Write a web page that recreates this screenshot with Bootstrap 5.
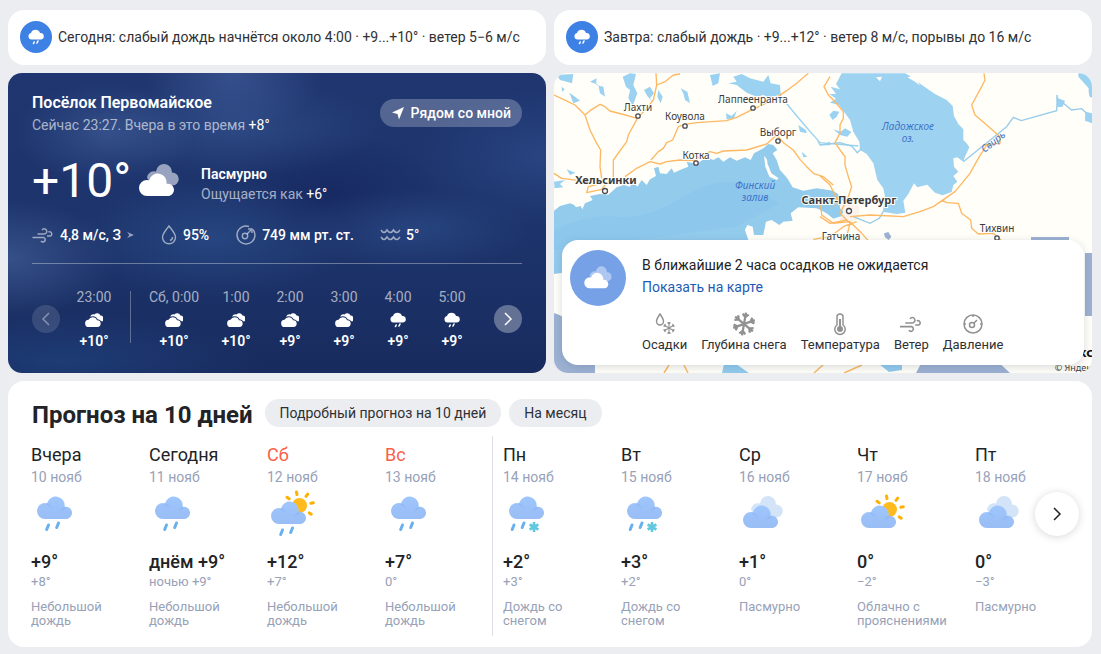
<!DOCTYPE html>
<html lang="ru">
<head>
<meta charset="utf-8">
<meta name="viewport" content="width=device-width, initial-scale=1">
<title>Погода — Посёлок Первомайское</title>
<link rel="stylesheet" href="https://cdn.jsdelivr.net/npm/bootstrap@5.3.0/dist/css/bootstrap.min.css">
<style>
:root { --ink: #222326; --muted: #97a1b8; }
body { background: #ecedf1; color: var(--ink); font-family: Roboto, "Noto Sans", sans-serif; font-size: 14px; line-height: 20px; }
.page { padding: 10px 9px 7px 8px; }
.tiles { --bs-gutter-x: 8px; --bs-gutter-y: 8px; }
.panel { background: #fff; border-radius: 16px; }
.alert-tile { min-height: 55px; padding: 0 12px 2px; gap: 6px; }
.alert-tile span { color: #2f3033; }
.disc { width: 32px; height: 32px; border-radius: 50%; background: #3d81e5; color: #fff; }
svg { display: block; flex: none; overflow: visible; }

.now { min-height: 300px; padding: 20px 24px 21px; color: #fff; border-radius: 14px;
  background:
    radial-gradient(ellipse 90px 50px at 18% 20%, rgba(96,130,190,.32), transparent),
    radial-gradient(ellipse 150px 50px at 42% 18%, rgba(80,118,180,.3), transparent),
    radial-gradient(ellipse 90px 55px at 42% 0, rgba(90,120,185,.4), transparent),
    radial-gradient(ellipse 110px 60px at 0 62%, rgba(96,130,185,.38), transparent),
    radial-gradient(ellipse 140px 60px at 38% 55%, rgba(54,96,160,.4), transparent),
    radial-gradient(ellipse 120px 40px at 75% 52%, rgba(60,100,165,.35), transparent),
    radial-gradient(ellipse 130px 70px at 100% 28%, rgba(60,96,165,.35), transparent),
    radial-gradient(ellipse 110px 60px at 60% 40%, rgba(16,26,84,.4), transparent),
    radial-gradient(ellipse 200px 50px at 10% 96%, rgba(38,84,150,.4), transparent),
    linear-gradient(#1f3670, #1c336a 60%, #182b5e); }
.now h1 { font-size: 16px; line-height: 20px; font-weight: 600; margin-bottom: 2px; }
.dim { color: rgba(255,255,255,.62); }
.near { height: 28px; margin-top: 6px; padding: 0 11px; gap: 6px; border: 0; border-radius: 14px; background: rgba(255,255,255,.24); color: #fff; font-weight: 500; }
.temp-row { margin-top: 18px; }
.temp-now { font-size: 48px; line-height: 56px; width: 107px; }
.feels { margin: 6px 0 0 22px; }
.facts { font-size: 14px; line-height: 20px; font-weight: 500; gap: 27px; margin-top: 16px; padding-bottom: 18px; border-bottom: 1px solid rgba(255,255,255,.34); }
.facts > div { gap: 6px; }
.facts svg { color: rgba(255,255,255,.55); }
.hours { margin-top: 23px; }
.hour { width: 54px; flex: none; }
.hour-wide { width: 70px; flex: none; }
.hour svg, .hour-wide svg { margin: 5px auto 3px; }
.midnight { width: 1px; height: 52px; margin: 4px 8px 0 9px; background: rgba(255,255,255,.3); }
.round { width: 28px; height: 28px; margin: 18px 7px 0 0; border: 0; border-radius: 50%; padding: 0; color: #fff; background: rgba(255,255,255,.32); }
.round:last-child { margin-right: 0; }
.round:disabled { background: rgba(255,255,255,.13); color: rgba(255,255,255,.4); }

.map-tile { min-height: 300px; border-radius: 14px; overflow: hidden; background: #fffef8; }
.map-tile > svg { position: absolute; inset: 0; width: 100%; height: 100%; }
.map-tile text { font-family: "Noto Sans", sans-serif; font-size: 10px; fill: #3c3c40; paint-order: stroke; stroke: #fffef8; stroke-width: 2px; }
.map-tile .city { font-size: 11px; font-weight: 700; }
.map-tile .sea { fill: #3f73c8; font-style: italic; stroke: none; }
.map-tile .logo { font-size: 13px; font-weight: 700; fill: #111; }
.map-tile .rights { font-size: 9px; }
.map-card { position: absolute; left: 8px; right: 8px; bottom: 8px; padding: 10px 8px 11px; gap: 16px; box-shadow: 0 2px 8px rgba(40,60,100,.18); }
.map-card .disc { width: 56px; height: 56px; background: #76a1e7; }
.map-card p { line-height: 22px; margin: 4px 0 0; }
.map-card a { line-height: 22px; color: #1f5bb5; }
.layers { gap: 14px; margin-top: 14px; }
.layers button { border: 0; background: none; padding: 0; color: #2f3033; font-size: 13px; line-height: 18px; }
.layers svg { margin: 0 auto; color: #919191; }

.forecast { padding: 18px 12px 11px; }
.forecast h2 { font-size: 24px; line-height: 32px; font-weight: 700; }
.pill { height: 28px; line-height: 28px; padding: 0 15px; border-radius: 14px; background: #ecedf1; color: #2f3033; }
.days { margin-top: 5px; overflow: hidden; }
.day { flex: 0 0 118px; min-height: 200px; padding: 7px 4px 0 10px; border-left: 1px solid transparent; font-size: 13px; line-height: 14px; color: var(--muted); }
.day.week { border-color: #dcdee3; }
.day h3 { font-size: 18px; line-height: 24px; font-weight: 400; color: var(--ink); }
.day.off h3 { color: #f9604a; }
.day time { font-size: 14px; line-height: 20px; }
.day svg { margin-bottom: 7px; }
.day strong { font-size: 18px; line-height: 24px; font-weight: 500; color: var(--ink); }
.day small { font-size: 13px; line-height: 16px; margin-bottom: 10px; }
.more { position: absolute; right: 13px; top: 111px; width: 44px; height: 44px; border: 0; border-radius: 50%; padding: 0; background: #fff; color: var(--ink); box-shadow: 0 1px 8px rgba(0,0,0,.16); }
</style>
<script src="https://cdn.jsdelivr.net/npm/bootstrap@5.3.0/dist/js/bootstrap.bundle.min.js"></script>
</head>
<body>
<svg width="0" height="0" class="position-absolute" aria-hidden="true">
  <defs>
    <linearGradient id="sky" x1="0" y1="0" x2="0" y2="1"><stop stop-color="#9fc6fe"/><stop offset="1" stop-color="#99bdf5"/></linearGradient>
    <path id="cloud" d="M8 22A8 8 0 0 1 8 6q1 0 2 .2A9 9 0 0 1 27.600 9.800 6.200 6.200 0 1 1 30 22Z"/>
    <path id="backcloud" d="M0 13A7 7 0 0 1 9 6.500A8 8 0 0 1 25 7.500A6.500 6.500 0 0 1 25.500 20.500H6Z"/>
    <g id="bluecloud"><use href="#cloud" fill="url(#sky)"/><path d="M10 6.200q4 1.500 5 6-2-4-6-4zM27.600 9.800q-3.500 1.500-4 5 2-3 5.500-3.500z" fill="#7ba7e8" opacity=".35"/></g>
    <g id="drops" fill="none" stroke="#69b0ee" stroke-width="3" stroke-linecap="round"><path d="M1.200 7.500 3 3M11.200 5.500 13 1"/></g>
    <g id="sun"><circle r="7.500" fill="#ffbb1e"/><g stroke="#ffb103" stroke-width="3" stroke-linecap="round"><path d="M-12.500-8.200l2.200 1.600M-3-13.500l.5 2.600M8.200-11.400 6.500-9.200M13.800-2.700 11.300-2.200M11.700 8.700 9.800 7.400"/></g></g>
    <g id="flake" stroke="#62c8e0" stroke-width="2.600"><path d="M0-5V5M-4.400-2.500 4.400 2.500M-4.400 2.500 4.400-2.500"/></g>
  </defs>
  <symbol id="rain" viewBox="0 0 56 62"><use href="#bluecloud" x="6" y="10"/><use href="#drops" x="14.500" y="35"/></symbol>
  <symbol id="sleet" viewBox="0 0 56 62"><use href="#bluecloud" x="6" y="10"/><use href="#drops" x="8" y="35"/><use href="#flake" x="31" y="40"/></symbol>
  <symbol id="sunrain" viewBox="0 0 56 62"><use href="#sun" x="32.500" y="18.500"/><use href="#bluecloud" x="4" y="15"/><use href="#drops" x="12.500" y="40"/></symbol>
  <symbol id="partly" viewBox="0 0 56 62"><use href="#sun" x="32.500" y="22.500"/><use href="#bluecloud" x="4" y="19"/></symbol>
  <symbol id="overcast" viewBox="0 0 56 62"><use href="#backcloud" x="12" y="10" fill="#d3e4f8"/><use href="#bluecloud" x="4" y="19"/></symbol>
  <symbol id="h-cloud" viewBox="0 0 18 16"><path d="M5 4.500Q7 1.500 9.500 2.500A3.600 3.600 0 0 1 15.500 3.500A3.200 3.200 0 0 1 17 9.500L13 8Z" fill="currentColor"/><path d="M4 15A3.600 3.600 0 0 1 3.500 7.800 4.600 4.600 0 0 1 12 8.200 3.400 3.400 0 0 1 12.500 15Z" fill="currentColor" stroke="#1b2f64" stroke-width="2" paint-order="stroke"/></symbol>
  <symbol id="h-rain" viewBox="0 0 18 16"><path d="M4.500 10.500A3.300 3.300 0 0 1 4 4 4.800 4.800 0 0 1 13 4 3.200 3.200 0 1 1 14 10.500Z" fill="currentColor"/><path d="M6.500 14.500 7.200 13M10 14 11 12" stroke="currentColor" stroke-width="1.600" stroke-linecap="round"/></symbol>
  <symbol id="wind" viewBox="0 0 21 16"><g fill="none" stroke="currentColor" stroke-width="1.500"><path d="M5 7H12A2.600 2.600 0 1 0 9.500 3M0 10.500H11A2.300 2.300 0 1 1 8.500 14M14.500 9H18A2.100 2.100 0 1 0 16 5"/></g></symbol>
  <symbol id="gauge" viewBox="0 0 20 20"><g fill="none" stroke="currentColor" stroke-width="1.500"><circle cx="10" cy="10" r="9"/><circle cx="9" cy="11" r="2.500"/><path d="M11 9 14 6M10 1v2M1 10h2M17 10h2"/></g></symbol>
  <symbol id="right" viewBox="0 0 12 14"><path d="M3 1 9 7 3 13" fill="none" stroke="currentColor" stroke-width="1.500"/></symbol>
</svg>

<main class="page container-fluid">
  <div class="row tiles">
    <div class="col-6">
      <div class="panel alert-tile d-flex align-items-center">
        <div class="disc d-flex align-items-center justify-content-center"><svg width="18" height="16"><use href="#h-rain"/></svg></div>
        <span>Сегодня: слабый дождь начнётся около 4:00 · +9...+10° · ветер 5−6 м/с</span>
      </div>
    </div>
    <div class="col-6">
      <div class="panel alert-tile d-flex align-items-center">
        <div class="disc d-flex align-items-center justify-content-center"><svg width="18" height="16"><use href="#h-rain"/></svg></div>
        <span>Завтра: слабый дождь · +9...+12° · ветер 8 м/с, порывы до 16 м/с</span>
      </div>
    </div>

    <div class="col-6">
      <section class="now">
        <div class="d-flex justify-content-between align-items-start">
          <div>
            <h1>Посёлок Первомайское</h1>
            <div class="dim">Сейчас 23:27. Вчера в это время <span class="text-white">+8°</span></div>
          </div>
          <button type="button" class="near d-flex align-items-center">
            <svg width="14" height="14" viewBox="0 0 14 14"><path d="M1 6.500 13 1 8 13.500 6.500 8Z" fill="currentColor"/></svg>
            Рядом со мной
          </button>
        </div>
        <div class="temp-row d-flex align-items-center">
          <div class="temp-now">+10°</div>
          <svg width="40" height="32" viewBox="0 0 40 32"><use href="#backcloud" x="8" fill="#98a3c0"/><use href="#cloud" y="9" fill="#fff"/></svg>
          <div class="feels"><div class="fw-semibold">Пасмурно</div><div class="dim">Ощущается как <span class="text-white">+6°</span></div></div>
        </div>
        <div class="facts d-flex">
          <div class="d-flex align-items-center"><svg width="22" height="16"><use href="#wind"/></svg>4,8 м/с, З<svg width="7" height="6" viewBox="0 0 9 8"><path d="M0 0 9 4 0 8 3 4Z" fill="currentColor"/></svg></div>
          <div class="d-flex align-items-center"><svg width="16" height="20" viewBox="0 0 16 20"><path d="M8 1C5 5 1.500 8.500 1.500 12.300a6.500 6.500 0 0 0 13 0C14.500 8.500 11 5 8 1ZM11.500 12a3.500 3.500 0 0 1-2.500 3.500" fill="none" stroke="currentColor" stroke-width="1.400"/></svg>95%</div>
          <div class="d-flex align-items-center"><svg width="20" height="20" viewBox="0 0 20 20"><g fill="none" stroke="currentColor" stroke-width="1.400"><path d="M13 1.500A9 9 0 1 0 19 10M19 10A9 9 0 0 0 17 4.500"/><circle cx="9" cy="11" r="2.700"/><path d="M11 9 16 4M12 4h4v4"/></g></svg>749 мм рт. ст.</div>
          <div class="d-flex align-items-center"><svg width="19" height="12" viewBox="0 0 19 12"><path d="M0 1q3 5 6 0 3.500 5 6.500 0 3 5 6.500 0M0 8q3 5 6 0 3.500 5 6.500 0 3 5 6.500 0" fill="none" stroke="currentColor" stroke-width="1.500"/></svg>5°</div>
        </div>
        <div class="hours d-flex text-center">
          <button type="button" class="round d-flex align-items-center justify-content-center" disabled aria-label="Назад"><svg width="12" height="14" viewBox="0 0 12 14"><path d="M9 1 3 7 9 13" fill="none" stroke="currentColor" stroke-width="1.500"/></svg></button>
          <div class="hour"><div class="dim">23:00</div><svg width="18" height="16"><use href="#h-cloud"/></svg><div class="fw-semibold">+10°</div></div>
          <div class="midnight"></div>
          <div class="hour-wide"><div class="dim">Сб, 0:00</div><svg width="18" height="16"><use href="#h-cloud"/></svg><div class="fw-semibold">+10°</div></div>
          <div class="hour"><div class="dim">1:00</div><svg width="18" height="16"><use href="#h-cloud"/></svg><div class="fw-semibold">+10°</div></div>
          <div class="hour"><div class="dim">2:00</div><svg width="18" height="16"><use href="#h-cloud"/></svg><div class="fw-semibold">+9°</div></div>
          <div class="hour"><div class="dim">3:00</div><svg width="18" height="16"><use href="#h-cloud"/></svg><div class="fw-semibold">+9°</div></div>
          <div class="hour"><div class="dim">4:00</div><svg width="18" height="16"><use href="#h-rain"/></svg><div class="fw-semibold">+9°</div></div>
          <div class="hour"><div class="dim">5:00</div><svg width="18" height="16"><use href="#h-rain"/></svg><div class="fw-semibold">+9°</div></div>
          <button type="button" class="round ms-auto d-flex align-items-center justify-content-center" aria-label="Вперёд"><svg width="12" height="14"><use href="#right"/></svg></button>
        </div>
      </section>
    </div>

    <div class="col-6">
      <section class="map-tile position-relative">
        <svg viewBox="0 0 538 300" preserveAspectRatio="xMidYMid slice" aria-label="Карта осадков">
          <g transform="translate(-4 -3) scale(.33333)">
            <!-- Финский залив -->
            <path fill="#93cbed" d="M12 422 30 408 60 400 72 404 78 412 92 408 97 418 105 400 128 390 120 378 150 372 175 374 200 352 222 345 240 350 250 335 262 350 275 330 290 345 300 328 318 318 312 295 325 290 330 310 350 312 365 295 372 308 395 298 415 290 410 275 440 282 470 262 490 270 505 262 520 275 540 262 560 272 585 262 602 270 612 250 640 235 655 222 670 225 682 240 668 250 680 270 690 300 712 325 728 352 760 362 800 355 850 362 880 385 870 410 885 435 850 446 830 430 800 415 745 412 722 430 728 452 700 455 688 465 665 450 648 455 640 495 612 495 608 470 592 465 585 480 595 510 560 545 300 560 100 600 12 612Z"/>
            <path fill="#fffef8" d="M642 258q12 10 10 22l12 30 22 15-6 5-22-10-12-30z"/>
            <path fill="#83c3ea" opacity=".35" d="M12 480Q120 430 200 440T400 380 600 350L690 400 560 470 330 500 12 540Z"/>
            <!-- озёра Финляндии -->
            <g fill="#9bd2f2">
              <path d="M20 15 70 12 66 40 50 35 30 30ZM120 35 140 25 138 45 160 50 165 80 150 70 145 45ZM218 20 240 10 258 12 250 45 262 70 248 108 235 85 240 60 228 50ZM282 60 300 50 312 70 300 85 310 100 292 78ZM325 60 338 80 332 100 322 80ZM392 55 412 65 420 100 405 90 400 70ZM58 68 75 80 90 92 70 100ZM35 50 44 58 36 66ZM480 15 510 10 505 40 488 48ZM550 20 575 12 600 25 640 35 655 15 662 40 690 45 692 72 660 85 640 75 620 80 590 68 560 45 535 40 560 35ZM528 130 545 138 560 122 552 145 530 148ZM745 165 768 180 770 190 750 185ZM755 245 772 260 760 262ZM12 335 45 330 30 342 40 352 14 355ZM50 298 76 308 60 315ZM800 210 815 225 840 215 840 226 808 226Z"/>
              <path d="M690 75Q740 140 810 218L925 228" fill="none" stroke="#9bd2f2" stroke-width="4"/>
            </g>
            <g transform="translate(810 0)">
              <path fill="#fbf3ec" d="M60 400 80 395 118 405 118 445 85 460 58 450Z"/>
              <!-- Ладожское озеро -->
              <path fill="#9dd2f1" d="M65 10 48 42 60 58 32 50 48 72 28 72 48 86 30 98 56 104 72 125 90 150 100 185 118 215 120 240 140 252 160 280 172 330 190 355 196 385 188 425 230 432 256 428 250 392 265 372 282 340 292 352 322 344 345 368 368 376 395 366 400 345 412 335 400 318 415 305 402 290 400 265 412 262 430 275 435 260 448 232 440 220 430 210 430 178 415 162 402 138 398 108 380 90 345 72 310 48 285 30 300 48 270 18 255 10Z"/>
              <path fill="#fffef8" d="M168 22 186 20 180 34ZM262 22 280 18 300 45 285 35Z"/>
              <path fill="#9bd2f2" d="M28 135 40 122 58 125 50 140 38 150ZM40 178 62 185 75 175 94 186 82 200 60 195ZM775 10H816V82Q805 85 806 55L775 20ZM796 125 816 130V160L795 152ZM708 70 712 85 735 92 728 110 712 112Z"/>
              <path fill="#93cbed" d="M0 358 30 370 40 395 70 425 62 440 20 430 0 410Z"/>
              <path d="M0 225 60 218 95 228 112 248 125 235M430 275 480 235 560 170 580 142 604 152 710 122 712 75M712 85 755 120 785 116 800 130M100 440 150 460 178 445 190 425" fill="none" stroke="#97cceb" stroke-width="4"/>
              <path fill="#9db1d2" d="M192 490 205 486 214 500 206 510 195 502ZM633 501H747V512H633Z"/>
            </g>
            <!-- дороги -->
            <g fill="none" stroke="#fdb863" stroke-width="4" stroke-linejoin="round">
              <path d="M12 75 40 88 75 105 105 135 120 180 140 220 152 240 150 290 155 325M105 135 120 122 150 103 165 110 180 123 215 132 262 145 235 195 230 215 190 270 190 325M318 10 320 45 310 90 290 115 262 145M320 45 345 35 370 15 390 12M225 320 260 295 300 275 330 282 350 275 390 270 440 272M303 270 325 245 340 235 350 218 368 210 385 170 405 163 440 158 530 152 560 142 608 118 665 92 710 62 740 40 775 10M440 265 480 245 500 250 520 243 590 240 650 222 680 195 700 218 730 240 750 268 770 290 790 310 820 320 850 345M12 310 35 325 60 328 155 340 115 350 110 368 155 358 165 345M840 20 822 50 835 75 850 90 880 125 880 145 870 165 870 190 855 218 870 240 885 260 885 285 895 320 905 350 895 380 870 430M810 318 840 345 860 385 855 410M812 405 815 435 850 460 900 455M790 508 840 500 880 470 920 455M900 455 935 490 955 512M900 440 960 435 1060 440 1110 425 1150 410 1215 365 1260 310 1285 265 1310 225M1302 10 1305 30 1295 50 1265 105 1275 135 1310 165 1350 200 1350 220 1300 225M1175 390 1190 398 1225 400 1235 430 1262 450 1265 475 1285 492 1330 490 1355 512M870 430 900 460 890 500M810 440 840 460 890 450"/>
            </g>
          </g>
          <!-- нижний и правый край карты -->
          <path fill="#9db1d2" d="M531 180H538V243H531ZM0 240Q20 246 30 270L41 292V300H0ZM362 300 370 285H440L456 300Z"/>
          <path fill="#93cbed" d="M168 300 170 291H182L195 300ZM325 291H348V297L335 299Z"/>
          <path fill="none" stroke="#fdb863" stroke-width="1.500" d="M110 300 115 292M130 292 134 300M260 300 270 291M290 300 308 292"/>
          <g fill="#fff" stroke="#4a4a50" stroke-width="1.300"><circle cx="84" cy="43" r="2.200"/><circle cx="131" cy="53" r="2.200"/><circle cx="199" cy="35" r="2.200"/><circle cx="224" cy="68" r="2.200"/><circle cx="142" cy="90" r="2.200"/><circle cx="51" cy="118" r="2.500"/><circle cx="295" cy="138" r="2.500"/><circle cx="443" cy="165" r="2.200"/></g>
          <g text-anchor="middle">
            <text x="84" y="38">Лахти</text><text x="131" y="47">Коувола</text><text x="199" y="30">Лаппеенранта</text><text x="224" y="63">Выборг</text><text x="142" y="86">Котка</text>
            <text x="52" y="111" class="city">Хельсинки</text><text x="295" y="131" class="city">Санкт-Петербург</text>
            <text x="287" y="167">Гатчина</text><text x="443" y="159">Тихвин</text>
            <text x="201" y="116" class="sea">Финский</text><text x="201" y="128" class="sea">залив</text>
            <text x="354" y="57" class="sea">Ладожское</text><text x="354" y="69" class="sea">оз.</text>
            <text x="440" y="72" class="sea" transform="rotate(-38 440 70)">Свирь</text>
          </g>
          <g text-anchor="end">
            <text x="537" y="298" class="rights">© Яндек</text>
            <text x="539" y="284" class="logo">кс</text>
          </g>
        </svg>
        <div class="map-card panel d-flex">
          <div class="disc d-flex flex-shrink-0 align-items-center justify-content-center"><svg width="28" height="22" viewBox="0 0 40 32"><use href="#backcloud" x="8" fill="#adc7f2"/><use href="#cloud" y="9" fill="#fff"/></svg></div>
          <div>
            <p>В ближайшие 2 часа осадков не ожидается</p>
            <a href="#" class="text-decoration-none">Показать на карте</a>
            <div class="layers d-flex">
              <button type="button"><svg width="22" height="24" viewBox="0 0 22 24"><path d="M6 2C4 5 2.500 7 2.500 9.500a3.500 3.500 0 0 0 7 0C9.500 7 8 5 6 2Z" fill="none" stroke="currentColor" stroke-width="1.400"/><g transform="translate(15 16)" fill="none" stroke="currentColor" stroke-width="1.100"><g id="arm"><path d="M0-6V6M-1.500-5.500 0-4 1.500-5.500M-1.500 5.500 0 4 1.500 5.500"/></g><use href="#arm" transform="rotate(60)"/><use href="#arm" transform="rotate(120)"/></g></svg>Осадки</button>
              <button type="button"><svg width="24" height="24" viewBox="-12 -12 24 24"><g transform="rotate(10)" fill="none" stroke="currentColor" stroke-width="2.300"><g id="bigarm"><path d="M0-11.500V11.500M-3-10 0-7 3-10M-3 10 0 7 3 10"/></g><use href="#bigarm" transform="rotate(60)"/><use href="#bigarm" transform="rotate(120)"/></g></svg>Глубина снега</button>
              <button type="button"><svg width="14" height="24" viewBox="0 0 14 24"><path d="M4 13V5a3 3 0 0 1 6 0v8a5.200 5.200 0 1 1-6 0Z" fill="none" stroke="currentColor" stroke-width="1.500"/><circle cx="7" cy="17" r="3" fill="currentColor"/><path d="M7 7v9" stroke="currentColor" stroke-width="2"/></svg>Температура</button>
              <button type="button"><svg width="22" height="24"><use href="#wind"/></svg>Ветер</button>
              <button type="button"><svg width="20" height="24"><use href="#gauge"/></svg>Давление</button>
            </div>
          </div>
        </div>
      </section>
    </div>

    <div class="col-12">
      <section class="panel forecast position-relative">
        <div class="d-flex align-items-start gap-2 ps-2 ms-1">
          <h2 class="mb-0 me-1">Прогноз на 10 дней</h2>
          <a href="#" class="pill text-decoration-none">Подробный прогноз на 10 дней</a>
          <a href="#" class="pill text-decoration-none">На месяц</a>
        </div>
        <ul class="days d-flex list-unstyled mb-0">
          <li class="day"><h3 class="mb-0">Вчера</h3><time class="d-block">10 нояб</time><svg width="56" height="56"><use href="#rain" width="56" height="62"/></svg><strong class="d-block">+9°</strong><small class="d-block">+8°</small>Небольшой дождь</li>
          <li class="day"><h3 class="mb-0">Сегодня</h3><time class="d-block">11 нояб</time><svg width="56" height="56"><use href="#rain" width="56" height="62"/></svg><strong class="d-block">днём +9°</strong><small class="d-block">ночью +9°</small>Небольшой дождь</li>
          <li class="day off"><h3 class="mb-0">Сб</h3><time class="d-block">12 нояб</time><svg width="56" height="56"><use href="#sunrain" width="56" height="62"/></svg><strong class="d-block">+12°</strong><small class="d-block">+7°</small>Небольшой дождь</li>
          <li class="day off"><h3 class="mb-0">Вс</h3><time class="d-block">13 нояб</time><svg width="56" height="56"><use href="#rain" width="56" height="62"/></svg><strong class="d-block">+7°</strong><small class="d-block">0°</small>Небольшой дождь</li>
          <li class="day week"><h3 class="mb-0">Пн</h3><time class="d-block">14 нояб</time><svg width="56" height="56"><use href="#sleet" width="56" height="62"/></svg><strong class="d-block">+2°</strong><small class="d-block">+3°</small>Дождь со<br>снегом</li>
          <li class="day"><h3 class="mb-0">Вт</h3><time class="d-block">15 нояб</time><svg width="56" height="56"><use href="#sleet" width="56" height="62"/></svg><strong class="d-block">+3°</strong><small class="d-block">+2°</small>Дождь со<br>снегом</li>
          <li class="day"><h3 class="mb-0">Ср</h3><time class="d-block">16 нояб</time><svg width="56" height="56"><use href="#overcast" width="56" height="62"/></svg><strong class="d-block">+1°</strong><small class="d-block">0°</small>Пасмурно</li>
          <li class="day"><h3 class="mb-0">Чт</h3><time class="d-block">17 нояб</time><svg width="56" height="56"><use href="#partly" width="56" height="62"/></svg><strong class="d-block">0°</strong><small class="d-block">−2°</small>Облачно с прояснениями</li>
          <li class="day"><h3 class="mb-0">Пт</h3><time class="d-block">18 нояб</time><svg width="56" height="56"><use href="#overcast" width="56" height="62"/></svg><strong class="d-block">0°</strong><small class="d-block">−3°</small>Пасмурно</li>
        </ul>
        <button type="button" class="more d-flex align-items-center justify-content-center" aria-label="Следующие дни"><svg width="12" height="14"><use href="#right"/></svg></button>
      </section>
    </div>
  </div>
</main>
</body>
</html>
